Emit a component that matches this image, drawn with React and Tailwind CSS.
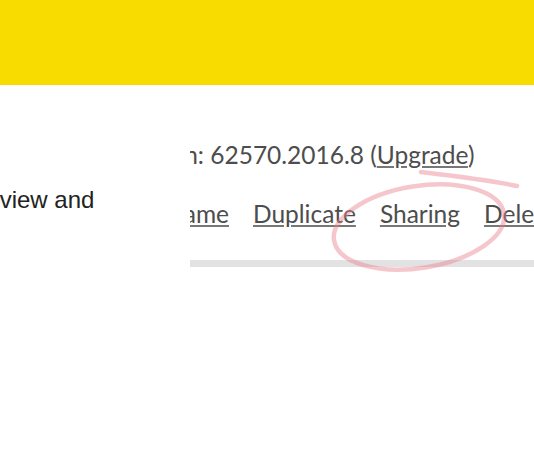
export default function App() {
  const links = ['Duplicate', 'Sharing', 'Delete'];

  return (
    <div className="relative h-[450px] w-[534px] overflow-hidden bg-white">
      <header className="h-[85px] bg-[#f8dc00]" />

      <div className="flex">
        <div className="w-[190px] shrink-0 overflow-hidden pt-[98px]">
          <p className="-ml-[35px] whitespace-nowrap text-[24px] leading-[33px] text-[#222] font-['Liberation_Sans',Arial,sans-serif]">
            preview and
          </p>
        </div>

        <div className="min-w-0 flex-1 overflow-hidden pt-[53px] text-[24.5px] leading-[33px] text-[#4d4d4d] font-['Lato','Open_Sans',sans-serif]">
          <p className="whitespace-nowrap">
            <span className="inline-flex w-[14px] justify-end">
              <span className="whitespace-nowrap">Version:</span>
            </span>{' '}
            62570.2016.8 (<a className="underline decoration-[#777] underline-offset-[2px]">Upgrade</a>)
          </p>

          <div className="mt-[26px] flex gap-[24px] whitespace-nowrap">
            <span className="flex w-[39px] shrink-0 justify-end">
              <a className="whitespace-nowrap underline decoration-[#777] underline-offset-[2px]">Rename</a>
            </span>
            {links.map((l) => (
              <a key={l} className="shrink-0 underline decoration-[#777] underline-offset-[2px]">
                {l}
              </a>
            ))}
          </div>

          <div className="mt-[30px] h-[7px] bg-[#e2e2e2]" />
        </div>
      </div>

      {/* pen annotation */}
      <svg className="pointer-events-none absolute inset-0" width="534" height="450" viewBox="0 0 534 450">
        <g fill="none" stroke="#e8838f" strokeOpacity="0.45" strokeWidth="4.5" strokeLinecap="round">
          <ellipse cx="419" cy="227" rx="86" ry="41" transform="rotate(-9 419 227)" />
          <path d="M421 172 C 455 176, 490 180, 517 186" />
        </g>
      </svg>
    </div>
  );
}
